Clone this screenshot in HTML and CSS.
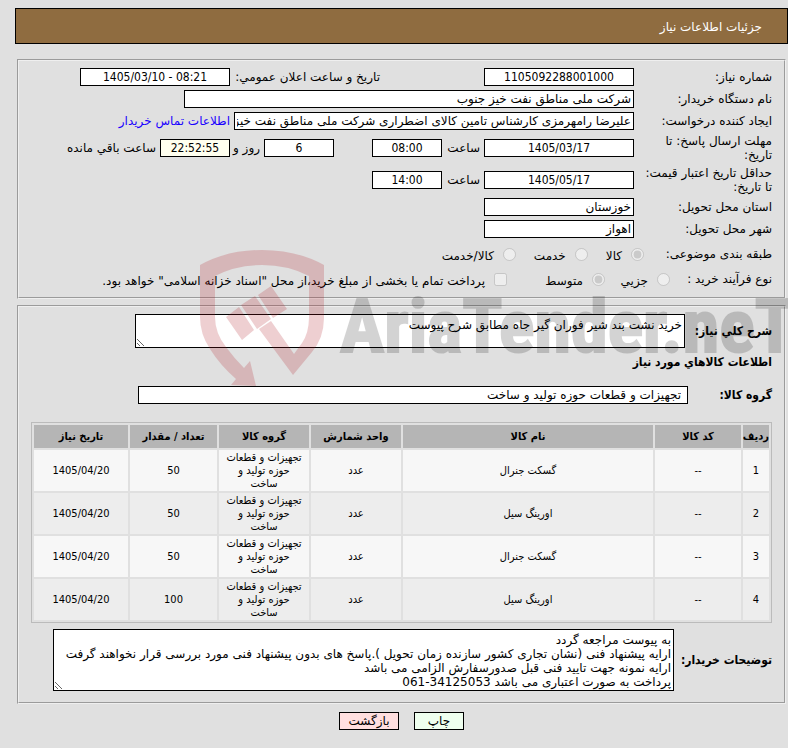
FILE: index.html
```
<!DOCTYPE html>
<html lang="fa" dir="rtl">
<head>
    <meta charset="UTF-8">
    <meta name="viewport" content="width=device-width, initial-scale=1.0">
    <title>جزئیات اطلاعات نیاز</title>
    <link rel="stylesheet" href="styles.css">
</head>
<body>
    <div class="header">جزئیات اطلاعات نیاز</div>
    <form>
        <fieldset class="info">
            <div class="row">
                <label class="title" for="needNo">شماره نیاز:</label>
                <input class="date" type="text" id="needNo" value="1105092288001000">
                <label class="announce" for="announceDate">تاریخ و ساعت اعلان عمومي:</label>
                <input class="date" type="text" id="announceDate" dir="ltr" value="1405/03/10 - 08:21">
            </div>
            <div class="row">
                <label class="title" for="buyer">نام دستگاه خریدار:</label>
                <input class="buyer" type="text" id="buyer" value="شرکت ملی مناطق نفت خیز جنوب">
            </div>
            <div class="row">
                <label class="title" for="creator">ایجاد کننده درخواست:</label>
                <input class="creator" type="text" id="creator" value="علیرضا رامهرمزی کارشناس تامین کالای اضطراری شرکت ملی مناطق نفت خیز جنوب">
                <a class="contact" href="#">اطلاعات تماس خریدار</a>
            </div>
            <div class="row tall">
                <label class="title" for="replyDate">مهلت ارسال پاسخ: تا<br>تاریخ:</label>
                <input class="date" type="text" id="replyDate" value="1405/03/17">
                <label class="hour" for="replyHour">ساعت</label>
                <input class="time" type="text" id="replyHour" value="08:00">
                <input class="time days" type="text" id="days" value="6">
                <label class="and" for="days">روز و</label>
                <input class="time remain" type="text" id="remain" value="22:52:55">
                <label class="left" for="remain">ساعت باقي مانده</label>
            </div>
            <div class="row tall">
                <label class="title" for="priceDate">حداقل تاریخ اعتبار قیمت:<br>تا تاریخ:</label>
                <input class="date" type="text" id="priceDate" value="1405/05/17">
                <label class="hour" for="priceHour">ساعت</label>
                <input class="time" type="text" id="priceHour" value="14:00">
            </div>
            <div class="row">
                <label class="title" for="province">استان محل تحویل:</label>
                <input class="place" type="text" id="province" value="خوزستان">
            </div>
            <div class="row">
                <label class="title" for="city">شهر محل تحویل:</label>
                <input class="place" type="text" id="city" value="اهواز">
            </div>
            <div class="row options subject">
                <span class="title">طبقه بندی موضوعی:</span>
                <label><input type="radio" name="subject" checked disabled><span>کالا</span></label>
                <label><input type="radio" name="subject" disabled><span>خدمت</span></label>
                <label><input type="radio" name="subject" disabled><span>کالا/خدمت</span></label>
            </div>
            <div class="row options process">
                <span class="title">نوع فرآیند خرید :</span>
                <label><input type="radio" name="process" disabled><span>جزیي</span></label>
                <label class="medium"><input type="radio" name="process" checked disabled><span>متوسط</span></label>
                <label><input type="checkbox" disabled><span>پرداخت تمام یا بخشی از مبلغ خرید،از محل "اسناد خزانه اسلامی" خواهد بود.</span></label>
            </div>
        </fieldset>

        <fieldset class="goods">
            <div class="line">
                <label class="summary-label" for="summary">شرح کلي نیاز:</label>
                <textarea class="summary" id="summary">خرید نشت بند شیر فوران گیر جاه مطابق شرح پیوست</textarea>
            </div>
            <h2>اطلاعات کالاهاي مورد نیاز</h2>
            <div class="line group-line">
                <label class="group-label" for="group">گروه کالا:</label>
                <input class="group" type="text" id="group" value="تجهیزات و قطعات حوزه تولید و ساخت">
            </div>
            <table>
                <colgroup>
                    <col class="c-row"><col class="c-code"><col><col class="c-unit"><col class="c-group"><col class="c-count"><col class="c-date">
                </colgroup>
                <thead>
                    <tr>
                        <th>ردیف</th>
                        <th>کد کالا</th>
                        <th>نام کالا</th>
                        <th>واحد شمارش</th>
                        <th>گروه کالا</th>
                        <th>تعداد / مقدار</th>
                        <th>تاریخ نیاز</th>
                    </tr>
                </thead>
                <tbody>
                    <tr>
                        <td>1</td><td>--</td><td>گسکت جنرال</td><td>عدد</td>
                        <td>تجهیزات و قطعات<br>حوزه تولید و<br>ساخت</td>
                        <td>50</td><td>1405/04/20</td>
                    </tr>
                    <tr>
                        <td>2</td><td>--</td><td>اورینگ سیل</td><td>عدد</td>
                        <td>تجهیزات و قطعات<br>حوزه تولید و<br>ساخت</td>
                        <td>50</td><td>1405/04/20</td>
                    </tr>
                    <tr>
                        <td>3</td><td>--</td><td>گسکت جنرال</td><td>عدد</td>
                        <td>تجهیزات و قطعات<br>حوزه تولید و<br>ساخت</td>
                        <td>50</td><td>1405/04/20</td>
                    </tr>
                    <tr>
                        <td>4</td><td>--</td><td>اورینگ سیل</td><td>عدد</td>
                        <td>تجهیزات و قطعات<br>حوزه تولید و<br>ساخت</td>
                        <td>100</td><td>1405/04/20</td>
                    </tr>
                </tbody>
            </table>
            <div class="line">
                <label class="notes-label" for="notes">توضیحات خریدار:</label>
                <textarea class="notes" id="notes">به پیوست مراجعه گردد
ارایه پیشنهاد فنی (نشان تجاری کشور سازنده زمان تحویل ).پاسخ های بدون پیشنهاد فنی مورد بررسی قرار نخواهند گرفت
ارایه نمونه جهت تایید فنی قبل صدورسفارش الزامی می باشد
پرداخت به صورت اعتباری می باشد 34125053-061</textarea>
            </div>
        </fieldset>

        <div class="buttons">
            <button class="print" type="button">چاپ</button>
            <button class="back" type="button">بازگشت</button>
        </div>
    </form>

    <div class="watermark" dir="ltr" aria-hidden="true">
        <svg width="124" height="136" viewBox="0 0 124 136">
            <path d="M0 15Q27 0 62 0T124 15V67Q124 88 112 102L93 125L59 79L71 71L94 104L102 93Q109 83 109 67V26Q88 15 62 15T15 26V67Q15 83 26 97Q34 108 44 118L50 111L56 136L31 135L36 129Q20 115 10 99Q0 84 0 67Z"/>
            <path d="M58 45L71 36L87 59L73 68ZM41 55L55 46L71 69L57 79ZM26 67L39 57L54 80L42 90Z"/>
        </svg>
        <span>AriaTender.neT</span>
    </div>
</body>
</html>
```
FILE: styles.css
```
body {
    margin: 0;
    padding: 8px 0 18px 15px;
    direction: ltr;
    position: relative;
    overflow-x: hidden;
    background-color: #e0e0e0;
    color: #000;
    font-family: Tahoma, "DejaVu Sans", sans-serif;
    font-size: 12px;
    line-height: 14px;
}
.header {
    direction: rtl;
    box-sizing: border-box;
    height: 36px;
    margin-bottom: 15px;
    padding: 0 25px;
    border: 1px solid #000;
    background-color: #8f6c40;
    color: #fff;
    line-height: 36px;
}
form {
    direction: rtl;
}
fieldset {
    margin: 0 2px 6px;
    padding: 5px 12px 0;
    border: 2px groove threedface;
    min-width: 0;
}
.info {
    padding-bottom: 7px;
}
.row {
    display: flex;
    align-items: center;
    height: 22px;
}
.row.tall {
    height: 32px;
}
.row .title {
    flex: none;
    width: 138px;
    white-space: nowrap;
}
input, textarea, button {
    box-sizing: border-box;
    margin: 0;
    border: 1px solid #000;
    border-radius: 0;
    background-color: #fff;
    color: #000;
    font: inherit;
}
input {
    flex: none;
    height: 18px;
    padding: 0 2px;
}
.date, .time, table, .line label, h2 {
    font-family: Tahoma, "DejaVu Sans Condensed", "DejaVu Sans", sans-serif;
}
.date {
    width: 150px;
    text-align: center;
}
.announce {
    width: 146px;
    margin-right: 104px;
    margin-left: 4px;
    white-space: nowrap;
}
.buyer {
    width: 450px;
}
.creator {
    width: 400px;
}
.contact {
    margin-right: 4px;
    color: #1a00ff;
    text-decoration: none;
    white-space: nowrap;
}
.hour {
    width: 38px;
    padding-right: 4px;
}
.time {
    width: 70px;
    text-align: center;
}
.days {
    margin-right: 38px;
}
.and {
    width: 30px;
    padding-right: 4px;
    white-space: nowrap;
}
.remain {
    background-color: #ffffef;
}
.left {
    padding-right: 4px;
    white-space: nowrap;
}
.place {
    width: 150px;
}
.options label {
    display: flex;
    align-items: center;
    gap: 9px;
    white-space: nowrap;
}
.options input {
    width: 13px;
    height: 13px;
}
.options span {
    padding-top: 3px;
}
.options .title {
    padding-top: 0;
}
.row.subject {
    height: 28px;
    gap: 18px;
}
.subject .title {
    width: 110px;
}
.process .title {
    width: 102px;
}
.process label {
    width: 65px;
}
.process .medium {
    width: 98px;
}
.goods {
    padding: 7px 12px 11px;
}
.line {
    display: flex;
    align-items: center;
    gap: 4px;
}
.line label, h2 {
    margin: 0;
    font-size: 12px;
    font-weight: bold;
    white-space: nowrap;
}
.summary-label {
    width: 83px;
}
.group-label {
    width: 80px;
}
.notes-label {
    width: 94px;
}
textarea {
    display: block;
    padding: 3px 2px;
}
.summary {
    width: 550px;
    height: 34px;
}
h2 {
    padding: 7px 0 17px;
}
.group-line {
    margin-bottom: 18px;
}
.group {
    width: 550px;
    padding-right: 6px;
}
table {
    width: 100%;
    margin-bottom: 6px;
    border: 1px solid #bbb;
    border-spacing: 2px;
    table-layout: fixed;
    text-align: center;
    font-size: 11px;
    line-height: 13px;
}
th, td {
    padding: 1px 0;
}
th {
    height: 21px;
    background-color: #b5b5b5;
    white-space: nowrap;
}
td {
    background-color: #f7f7f7;
}
tbody tr:nth-child(even) td {
    background-color: #ededed;
}
.c-row {
    width: 26px;
}
.c-code {
    width: 86px;
}
.c-unit, .c-group {
    width: 90px;
}
.c-count {
    width: 87px;
}
.c-date {
    width: 94px;
}
.notes {
    width: 621px;
    height: 62px;
}
.buttons {
    display: flex;
    justify-content: center;
    gap: 15px;
    padding-top: 2px;
}
button {
    height: 18px;
    padding: 0;
    cursor: pointer;
}
.print {
    width: 50px;
    background-color: #efffef;
}
.back {
    width: 60px;
    background-color: #ffdfdf;
}
.watermark {
    position: absolute;
    top: 250px;
    left: 200px;
    right: 0;
    display: flex;
    gap: 16px;
    overflow: hidden;
    pointer-events: none;
}
.watermark svg {
    flex: none;
    fill: #af141e;
    opacity: 0.2;
}
.watermark span {
    opacity: 0.17;
    font-family: "Roboto Condensed", "Liberation Sans Narrow", sans-serif;
    font-size: 74px;
    font-weight: bold;
    line-height: 154px;
    white-space: nowrap;
    -webkit-text-stroke: 2px #000;
}
```
